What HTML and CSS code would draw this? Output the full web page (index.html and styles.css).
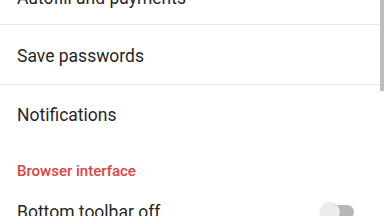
FILE: index.html
```html
<!DOCTYPE html>
<html lang="en">
<head>
  <meta charset="UTF-8">
  <meta name="viewport" content="width=device-width, initial-scale=1.0">
  <title>Settings</title>
  <link rel="stylesheet" href="styles.css">
</head>
<body>
  <div class="settings">
    <div class="pref-row divided first">Autofill and payments</div>
    <div class="pref-row divided">Save passwords</div>
    <div class="pref-row">Notifications</div>
    <div class="pref-category">Browser interface</div>
    <div class="pref-row switch-row">
      <span>Bottom toolbar off</span>
      <span class="switch">
        <span class="switch-track"></span>
        <span class="switch-thumb"></span>
      </span>
    </div>
  </div>
  <div class="scrollbar"></div>
</body>
</html>
```

FILE: styles.css
```css
body {
  font-family: Roboto, 'Noto Sans', sans-serif;
  margin: 0;
  padding: 0;
  background-color: #fff;
  overflow: hidden;
}

.settings {
  margin-top: -35px;
}

.pref-row {
  height: 59px;
  box-sizing: border-box;
  padding: 0 17px;
  display: flex;
  align-items: center;
  font-size: 17.5px;
  color: #262626;
}

.divided {
  height: 60px;
  padding-top: 3px;
  border-bottom: 1px solid #e8e8e8;
}

.first {
  padding-top: 6px;
}

.pref-category {
  padding: 17px 17px 0;
  line-height: 20px;
  font-size: 15px;
  font-weight: 500;
  color: #d8453f;
}

.switch-row {
  justify-content: space-between;
  padding-top: 2px;
  padding-right: 30px;
}

.switch {
  position: relative;
  width: 34px;
  height: 20px;
}

.switch-track {
  position: absolute;
  left: 4px;
  top: 3px;
  width: 30px;
  height: 14px;
  border-radius: 7px;
  background-color: #b7b7b7;
}

.switch-thumb {
  position: absolute;
  left: 0;
  top: 0;
  width: 20px;
  height: 20px;
  border-radius: 50%;
  background-color: #ececec;
  box-shadow: 0 1px 2px rgba(0, 0, 0, 0.15);
}

.scrollbar {
  position: fixed;
  top: 0;
  right: 0;
  width: 4px;
  height: 91px;
  background-color: #bdbdbd;
}
```
